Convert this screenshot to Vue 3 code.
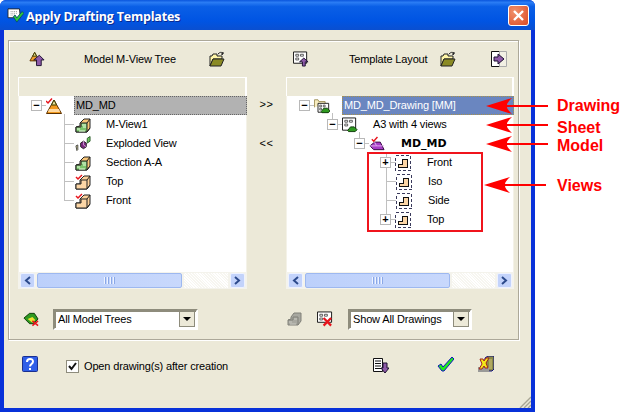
<script setup>
const leftRows = [
  { id: 'l0', label: 'MD_MD', icon: 'cone', indent: 13, exp: '−', selected: 'gray', gap: 12 },
  { id: 'l1', label: 'M-View1', icon: 'hatch', indent: 57, gap: 14, line: 46, branch: 'mid' },
  { id: 'l2', label: 'Exploded View', icon: 'exploded', indent: 57, gap: 14, line: 46, branch: 'mid' },
  { id: 'l3', label: 'Section A-A', icon: 'hatch', indent: 57, gap: 14, line: 46, branch: 'mid' },
  { id: 'l4', label: 'Top', icon: 'solid', indent: 57, gap: 14, line: 46, branch: 'mid' },
  { id: 'l5', label: 'Front', icon: 'solid', indent: 57, gap: 14, line: 46, branch: 'end' },
]

const rightRows = [
  { id: 'r0', label: 'MD_MD_Drawing [MM]', icon: 'drawing', indent: 13, exp: '−', selected: 'blue', gap: 12 },
  { id: 'r1', label: 'A3 with 4 views', icon: 'sheet', indent: 41, exp: '−', gap: 14, stem: true },
  { id: 'r2', label: 'MD_MD', icon: 'gem', indent: 68, exp: '−', gap: 15, bold: true, stem: true },
  { id: 'r3', label: 'Front', icon: 'frame', indent: 94, exp: '+', gap: 15, line: 100, branch: 'mid' },
  { id: 'r4', label: 'Iso', icon: 'frame', indent: 110, gap: 15, line: 100, branch: 'mid' },
  { id: 'r5', label: 'Side', icon: 'frame', indent: 110, gap: 15, line: 100, branch: 'mid' },
  { id: 'r6', label: 'Top', icon: 'frame', indent: 94, exp: '+', gap: 15, line: 100, branch: 'end' },
]

const notes = [
  { text: 'Drawing', top: 96, arrowTop: 98, tip: 486 },
  { text: 'Sheet', top: 118, arrowTop: 117, tip: 486 },
  { text: 'Model', top: 136, arrowTop: 136, tip: 486 },
  { text: 'Views', top: 176, arrowTop: 177, tip: 484 },
]
</script>

<template>
  <div class="page">
    <svg class="defs" width="0" height="0">
      <defs>
        <symbol id="cone" viewBox="0 0 16 16">
          <path d="M.5 15.500 8 2l7.500 13.500z" fill="#f29a1e" stroke="#5a3000" />
          <path d="M5.500 7 8 2l2.500 5z" fill="#e8e49a" stroke="#3c3c00" />
          <path d="M3 11h10l1 3H2z" fill="#ffd9a0" />
          <path d="M0 3l2 2 4-4.500" fill="none" stroke="#e8141c" stroke-width="1.500" />
        </symbol>
        <symbol id="coneup" viewBox="0 0 17 16">
          <path d="M1 10 6 1l5 9z" fill="#f2a02a" stroke="#5a3000" />
          <path d="M4 5 6 1l2 4z" fill="#e8e49a" stroke="#3c3c00" />
          <path d="M8 15V9H5l6-5 5 5h-3v6z" fill="#8e5aa8" stroke="#1c1030" />
        </symbol>
        <symbol id="folder" viewBox="0 0 16 16">
          <path d="M1 15V5h2l1-2h4v2h5v3H4l-3 7z" fill="#fff6a8" stroke="#222" />
          <path d="M1 15l3-7h11l-3 7z" fill="#8a8a24" stroke="#222" />
          <path d="M9 3c2-2 3-2 5-1l-1 2M14 1v2h-2" fill="none" stroke="#222" />
        </symbol>
        <symbol id="sheetup" viewBox="0 0 17 16">
          <path d="M.5.5h14v12H.5z" fill="#fff" stroke="#111" />
          <path d="M3 3h3v2H3zM8 3h3v2H8zM3 7h3v2H3z" fill="none" stroke="#555" />
          <path d="M10 15.500V11H7l4.500-4 4.500 4h-3v4.500z" fill="#8e5aa8" stroke="#1c1030" />
        </symbol>
        <symbol id="export" viewBox="0 0 16 16">
          <path d="M.5.5h8v15h-8z" fill="#fff" stroke="#111" />
          <path d="M8.500.5h7v15h-7z" fill="#f2f0e4" stroke="#aaa" />
          <path d="M3 6h4V3l6 5-6 5v-3H3z" fill="#8e5aa8" stroke="#1c1030" />
        </symbol>
        <symbol id="hatch" viewBox="0 0 16 16">
          <path d="M1 15V10l4-1V6l4-4h6v9l-3 4z" fill="#f8c678" stroke="#222" />
          <path d="M1 15V10h5V6h6v9z" fill="#7cc46c" stroke="#222" />
          <path d="M2 12h3M4 14h6M7 8h4M8 10h3" stroke="#e8ffe0" />
          <path d="M12 6l3-4M12 15l3-4" stroke="#222" />
        </symbol>
        <symbol id="solid" viewBox="0 0 16 16">
          <path d="M1 15V10h4V6l4-4h6v9l-3 4z" fill="#fcd09a" stroke="#222" />
          <path d="M1 10h5V6h6v9H1z" fill="#fcd6a6" stroke="#222" />
          <path d="M12 6l3-4M12 15l3-4" stroke="#222" />
          <path d="M1 3l2 2 4-4" fill="none" stroke="#e8141c" stroke-width="1.500" />
        </symbol>
        <symbol id="exploded" viewBox="0 0 17 16">
          <path d="M1 10l2-1v5l-1 1z" fill="#e8e49a" stroke="#444" />
          <path d="M6 7l3-2 3 2v4l-3 2-3-2z" fill="#7a2a80" stroke="#222" />
          <path d="M9 5v4l3 2" stroke="#d0a0d8" fill="none" />
          <path d="M13 2l3-2v5l-3 2z" fill="#6cc85c" stroke="#2a5a2a" />
        </symbol>
        <symbol id="drawing" viewBox="0 0 18 17">
          <path d="M.5 10V1.500h4l1 2h7v3" fill="#f8edc0" stroke="#9a8a50" />
          <path d="M4.500 5.500h12v10h-12z" fill="#fff" stroke="#111" />
          <path d="M6.500 7.500h2v2h-2zM10.500 7.500h2v2h-2zM6.500 11h2v2h-2z" fill="none" stroke="#555" />
          <path d="M8 15l3-4h4l3 3-2 2H9z" fill="#2f9a20" stroke="#0c3a08" />
        </symbol>
        <symbol id="sheet" viewBox="0 0 17 16">
          <path d="M.5.5h14v13H.5z" fill="#fff" stroke="#111" />
          <path d="M3 3h3v2H3zM8 3h3v2H8zM3 7h3v2H3z" fill="none" stroke="#555" />
          <path d="M6 14l3-4h4l3 3-2 2H7z" fill="#2f9a20" stroke="#0c3a08" />
        </symbol>
        <symbol id="gem" viewBox="0 0 17 16">
          <path d="M1 10l5-4h6l4 8H5z" fill="#a83cc8" stroke="#30083c" />
          <path d="M6 6l2 4h8M1 10h7" fill="none" stroke="#e0b0f0" />
          <path d="M3 3l2 2 4-4.500" fill="none" stroke="#e8141c" stroke-width="1.500" />
        </symbol>
        <symbol id="frame" viewBox="0 0 16 16">
          <path d="M.5.5h15v15H.5z" fill="none" stroke="#3a3a5c" stroke-dasharray="3 2" shape-rendering="crispEdges" />
          <path d="M3.500 12.500v-3h4v-5h5v8z" fill="#fcd6a6" stroke="#111" shape-rendering="crispEdges" />
        </symbol>
        <symbol id="modelx" viewBox="0 0 17 16">
          <path d="M1 7l6-5h5l4 6-5 5H7z" fill="#2f9a20" stroke="#0c3a08" />
          <path d="M5 8l5-2 3 3-3 3z" fill="#f2e030" />
          <path d="M10 10l6 5M16 10l-6 5" stroke="#e8141c" stroke-width="1.600" />
        </symbol>
        <symbol id="ghost" viewBox="0 0 15 14">
          <path d="M1 13V8l3-1V5l3-4h7v8l-3 4z" fill="#a8a8a0" stroke="#808078" />
          <path d="M1 8h5V5h5v8" fill="none" stroke="#808078" />
          <path d="M2 10h3M3 12h6M7 7h3" stroke="#c8c8c0" />
        </symbol>
        <symbol id="sheetx" viewBox="0 0 17 16">
          <path d="M.5.5h15v11H.5z" fill="#fff" stroke="#111" />
          <path d="M3 3h3v2H3zM8 3h3v2H8zM3 7h3v2H3z" fill="none" stroke="#555" />
          <path d="M7 7l8 8M15 7l-8 8" stroke="#e8141c" stroke-width="2.400" />
        </symbol>
        <symbol id="help" viewBox="0 0 16 16">
          <rect x=".5" y=".5" width="15" height="15" rx="1" fill="#2f5ee8" stroke="#1a2f90" />
          <path d="M5 6c0-4 6-4 6-.5C11 8 8 8 8 10.500" fill="none" stroke="#fff" stroke-width="2" />
          <path d="M7 12h2v2H7z" fill="#fff" />
        </symbol>
        <symbol id="listdown" viewBox="0 0 16 16">
          <path d="M.5 1.500h9v13h-9z" fill="#fff" stroke="#111" />
          <path d="M2 4h6M2 6.500h6M2 9h6M2 11.500h6" stroke="#111" />
          <path d="M10 6h4v5h2l-4 5-4-5h2z" fill="#8e5aa8" stroke="#1c1030" />
        </symbol>
        <symbol id="okcheck" viewBox="0 0 17 16">
          <path d="M1 10l3-2 2 3 9-10 2 2L7 15H5z" fill="#1fe81f" stroke="#1010c0" />
        </symbol>
        <symbol id="xcube" viewBox="0 0 16 16">
          <path d="M7 2l3-2h6v13l-2 2H7z" fill="#8a8a48" stroke="#101080" />
          <path d="M11 3h3v10h-3z" fill="#b0a860" />
          <path d="M0 11h11v5H0z" fill="#9a9a98" />
          <path d="M2 3h3l1 2 2-3h3L8 7l2 5H7L6 10l-2 3H1l3-5z" fill="#f4e818" stroke="#a02020" />
        </symbol>
        <symbol id="winicon" viewBox="0 0 19 17">
          <path d="M1 1h13l1 10H1z" fill="#fff" stroke="#222" />
          <path d="M4 4h8M4 6h8M4 8h6" stroke="#888" stroke-dasharray="1 1" />
          <path d="M7 10l2-2 2 3 6-7 2 2-8 10z" fill="#2bc83a" stroke="#0a4a70" />
        </symbol>
      </defs>
    </svg>

    <section class="window">
      <header class="titlebar">
        <svg class="icon win-icon"><use href="#winicon" /></svg>
        <span class="title">Apply Drafting Templates</span>
        <button class="close">
          <svg width="13" height="13" viewBox="0 0 13 13"><path d="M2 2l9 9M11 2l-9 9" stroke="#fff" stroke-width="2.400" /></svg>
        </button>
      </header>

      <div class="client">
        <div class="group">
          <div class="panes">
            <div class="side left">
              <div class="tools">
                <svg class="icon"><use href="#coneup" /></svg>
                <span class="tools-label left-label">Model M-View Tree</span>
                <svg class="icon"><use href="#folder" /></svg>
              </div>
              <div class="tree">
                <div class="tree-head"></div>
                <div class="tree-body">
                  <div
                    v-for="row in leftRows"
                    :key="row.id"
                    class="row"
                    :class="row.branch"
                    :style="{ paddingLeft: row.indent + 'px', '--line': row.line + 'px' }"
                  >
                    <span v-if="row.exp" class="exp">{{ row.exp }}</span>
                    <svg class="icon"><use :href="'#' + row.icon" /></svg>
                    <span class="label" :class="row.selected" :style="{ marginLeft: row.gap + 'px' }">{{ row.label }}</span>
                  </div>
                </div>
                <div class="scrollbar">
                  <span class="sb-btn">
                    <svg width="7" height="9" viewBox="0 0 7 9"><path d="M6 1 2 4.500 6 8" fill="none" stroke="#2c4a8c" stroke-width="2" /></svg>
                  </span>
                  <span class="sb-thumb"><i></i><i></i><i></i><i></i></span>
                  <span class="sb-track"></span>
                  <span class="sb-btn">
                    <svg width="7" height="9" viewBox="0 0 7 9"><path d="M1 1l4 3.500L1 8" fill="none" stroke="#2c4a8c" stroke-width="2" /></svg>
                  </span>
                </div>
              </div>
              <div class="foot">
                <svg class="icon foot-icon"><use href="#modelx" /></svg>
                <div class="combo left-combo">
                  <span>All Model Trees</span>
                  <span class="drop"><b></b></span>
                </div>
              </div>
            </div>

            <div class="arrows">
              <span>&gt;&gt;</span>
              <span>&lt;&lt;</span>
            </div>

            <div class="side right">
              <div class="tools">
                <svg class="icon"><use href="#sheetup" /></svg>
                <span class="tools-label right-label">Template Layout</span>
                <svg class="icon"><use href="#folder" /></svg>
                <svg class="icon export-r"><use href="#export" /></svg>
              </div>
              <div class="tree">
                <div class="tree-head"></div>
                <div class="tree-body">
                  <div
                    v-for="row in rightRows"
                    :key="row.id"
                    class="row"
                    :class="[row.branch, { stem: row.stem }]"
                    :style="{ paddingLeft: row.indent + 'px', '--line': row.line + 'px', '--stem': row.indent + 5 + 'px' }"
                  >
                    <span v-if="row.exp" class="exp">{{ row.exp }}</span>
                    <svg class="icon"><use :href="'#' + row.icon" /></svg>
                    <span class="label" :class="[row.selected, { bold: row.bold }]" :style="{ marginLeft: row.gap + 'px' }">{{ row.label }}</span>
                  </div>
                </div>
                <div class="scrollbar">
                  <span class="sb-btn">
                    <svg width="7" height="9" viewBox="0 0 7 9"><path d="M6 1 2 4.500 6 8" fill="none" stroke="#2c4a8c" stroke-width="2" /></svg>
                  </span>
                  <span class="sb-thumb"><i></i><i></i><i></i><i></i></span>
                  <span class="sb-track"></span>
                  <span class="sb-btn">
                    <svg width="7" height="9" viewBox="0 0 7 9"><path d="M1 1l4 3.500L1 8" fill="none" stroke="#2c4a8c" stroke-width="2" /></svg>
                  </span>
                </div>
              </div>
              <div class="foot">
                <svg class="icon ghost"><use href="#ghost" /></svg>
                <svg class="icon sheet-x"><use href="#sheetx" /></svg>
                <div class="combo right-combo">
                  <span>Show All Drawings</span>
                  <span class="drop"><b></b></span>
                </div>
              </div>
            </div>
          </div>
        </div>

        <div class="actions">
          <svg class="icon"><use href="#help" /></svg>
          <span class="check"><svg width="9" height="9" viewBox="0 0 9 9"><path d="M1 4l2.500 3L8 1" fill="none" stroke="#111" stroke-width="2" /></svg></span>
          <span class="check-label">Open drawing(s) after creation</span>
          <svg class="icon act-list"><use href="#listdown" /></svg>
          <svg class="icon act-ok"><use href="#okcheck" /></svg>
          <svg class="icon act-x"><use href="#xcube" /></svg>
        </div>
      </div>
      <svg class="grip" width="12" height="12" viewBox="0 0 12 12"><path d="M1 12 12 1M5 12l7-7M9 12l3-3" stroke="#a8a594" stroke-width="1.400" /></svg>
    </section>

    <div class="redbox"></div>
    <template v-for="note in notes" :key="note.text">
      <svg class="arrow" width="66" height="16" viewBox="0 0 66 16" :style="{ top: note.arrowTop + 'px', left: note.tip + 'px' }">
        <path d="M0 8 26 0c-3 3-5 5-5 7h41v2H21c0 2 2 4 5 7z" fill="#ff0000" />
      </svg>
      <span class="note" :style="{ top: note.top + 'px' }">{{ note.text }}</span>
    </template>
  </div>
</template>

<style>
html, body { margin: 0; background: #fff; }
</style>

<style scoped>
.page { position: relative; width: 623px; height: 412px; overflow: hidden; background: #fff; font-family: "Liberation Sans", Arial, sans-serif; font-size: 11px; letter-spacing: -.15px; color: #000; }
.defs { position: absolute; }
.icon { width: 16px; height: 16px; flex: none; display: block; }
.window { position: relative; width: 535px; height: 412px; box-sizing: border-box; display: flex; flex-direction: column; background: #0831d9; border-radius: 6px 6px 0 0; }
.titlebar { height: 30px; flex: none; display: flex; align-items: center; padding: 0 6px 0 7px; background: linear-gradient(#0a55dd 0, #2a7cf4 8%, #0a5fe6 22%, #0054e3 70%, #0a4fd0 100%); border-radius: 6px 6px 0 0; }
.win-icon { width: 17px; height: 15px; margin-right: 2px; }
.title { font-family: "Open Sans", sans-serif; font-weight: 700; font-size: 12.5px; letter-spacing: -.2px; padding-top: 2px; color: #fff; text-shadow: 1px 1px 0 #0a2a90; }
.close { margin-left: auto; width: 21px; height: 21px; padding: 0; border: 1px solid #fff; border-radius: 3px; background: radial-gradient(circle at 30% 30%, #f0916c, #dc4a24); display: flex; align-items: center; justify-content: center; }
.client { flex: 1; margin: 0 4px 4px; background: #ece9d8; padding: 10px 12px 0 4px; display: flex; flex-direction: column; }
.group { height: 300px; box-sizing: border-box; border: 1px solid #aca899; box-shadow: 1px 1px 0 #fff, inset 1px 1px 0 #fff; padding: 0 4px 0 9px; flex: none; }
.panes { display: flex; height: 100%; }
.side { display: flex; flex-direction: column; flex: none; }
.left { width: 229px; }
.right { width: 228px; }
.arrows { width: 39px; flex: none; display: flex; flex-direction: column; align-items: center; gap: 25px; padding-top: 56px; font-size: 11px; letter-spacing: .5px; }
.arrows span { height: 14px; line-height: 14px; }
.tools { height: 36px; flex: none; display: flex; align-items: center; }
.left .tools { padding-left: 11px; }
.right .tools { padding-left: 7px; }
.tools-label { white-space: nowrap; }
.left-label { margin-left: 39px; width: 125px; }
.right-label { margin-left: 40px; width: 91px; }
.export-r { margin-left: 35px; }
.tree { height: 212px; flex: none; background: #fff; display: flex; flex-direction: column; box-shadow: inset 0 0 0 1px #f4f2e8; }
.tree-head { height: 19px; flex: none; background: #ece9d8; border-top: 1px solid #fff; border-right: 2px solid #fff; border-left: 1px solid #fff; box-sizing: border-box; }
.tree-body { flex: 1; }
.row { position: relative; height: 19px; display: flex; align-items: center; white-space: nowrap; }
.row.mid::before, .row.end::before { content: ""; position: absolute; left: var(--line); top: -1px; width: 1px; background: #c0c0c0; }
.row.mid::before { bottom: 0; }
.row.end::before { bottom: 9px; }
.row.mid::after, .row.end::after { content: ""; position: absolute; left: var(--line); top: 9px; width: 10px; height: 1px; background: #c0c0c0; }
.row.stem::before { content: ""; position: absolute; left: var(--stem); top: -2px; height: 6px; width: 1px; background: #c0c0c0; }
.exp { position: relative; z-index: 1; width: 11px; height: 11px; flex: none; box-sizing: border-box; border: 1px solid #b8b8b8; background: #fff; font-size: 11px; line-height: 8px; text-align: center; margin-right: 4px; font-weight: 700; letter-spacing: 0; }
.exp::after { content: ""; position: absolute; left: 10px; top: 4px; width: 4px; height: 1px; background: #c0c0c0; }
.row .icon { position: relative; z-index: 1; }
.label { line-height: 17px; padding: 0 2px 0 1px; }
.label.gray { flex: 1; background: #b2b2b2; border: 1px dotted #666; }
.label.blue { flex: 1; background: #6a86c0; color: #fff; border: 1px dotted #a8924c; }
.label.bold { font-weight: 700; font-family: "DejaVu Sans", sans-serif; letter-spacing: 0; }
.scrollbar { height: 17px; flex: none; display: flex; align-items: center; gap: 2px; padding: 0 2px; background: #f4f3ec; box-sizing: border-box; }
.sb-btn { width: 15px; height: 15px; flex: none; display: flex; align-items: center; justify-content: center; background: #c3d3fb; border: 1px solid #eef2ff; border-radius: 2px; box-sizing: border-box; }
.sb-thumb { width: 145px; height: 15px; flex: none; display: flex; align-items: center; justify-content: center; gap: 1px; background: linear-gradient(90deg, #bcd0fb, #c8d8fc); border: 1px solid #9db8f0; border-radius: 2px; box-sizing: border-box; }
.sb-thumb i { width: 1px; height: 7px; background: #eef3ff; box-shadow: 1px 0 0 #8aa8e8; margin-right: 1px; }
.sb-track { flex: 1; height: 15px; background: repeating-linear-gradient(45deg, #f7f6f0 0 1px, #fff 1px 2px); }
.foot { flex: 1; display: flex; align-items: center; padding-top: 10px; }
.left .foot { padding-left: 5px; }
.foot-icon { margin-right: 14px; }
.ghost { margin-left: 1px; width: 15px; height: 14px; }
.sheet-x { margin-left: 15px; margin-right: 15px; }
.combo { height: 21px; box-sizing: border-box; display: flex; align-items: center; justify-content: space-between; background: #fff; border: 2px solid; border-color: #8e8c7c #fff #fff #8e8c7c; padding: 0 1px 0 3px; box-shadow: 1px 1px 0 #8e8c7c inset; }
.left-combo { width: 145px; }
.right-combo { width: 124px; }
.drop { width: 16px; height: 16px; box-sizing: border-box; background: #ece9d8; border: 1px solid #8e8c7c; display: flex; align-items: center; justify-content: center; }
.drop b { width: 0; height: 0; border: 4px solid transparent; border-top-color: #000; border-bottom: 0; }
.actions { flex: 1; display: flex; align-items: flex-start; padding: 16px 0 0 14px; }
.check { width: 13px; height: 13px; box-sizing: border-box; border: 1px solid #8e8c7c; background: #fff; display: flex; align-items: center; justify-content: center; margin: 4px 0 0 28px; flex: none; }
.check-label { margin: 4px 0 0 5px; width: 289px; white-space: nowrap; }
.act-list { margin-top: 1px; }
.act-ok { width: 17px; margin-left: 48px; }
.act-x { margin-left: 24px; }
.grip { position: absolute; right: 4px; bottom: 4px; }
.redbox { position: absolute; left: 367px; top: 152px; width: 112px; height: 76px; border: 2px solid #f0141c; }
.arrow { position: absolute; }
.note { position: absolute; left: 557px; font-size: 16px; line-height: 20px; font-weight: 700; letter-spacing: 0; color: #ff0000; }
</style>
